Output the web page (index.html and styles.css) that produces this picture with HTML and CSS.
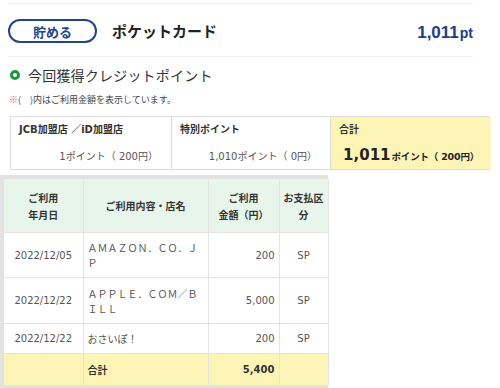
FILE: index.html
```html
<!DOCTYPE html>
<html lang="ja">
<head>
<meta charset="utf-8">
<title>ポケットカード</title>
<link rel="stylesheet" href="styles.css">
</head>
<body>
<div class="page">
  <header class="top">
    <div class="pill">貯める</div>
    <div class="card">ポケットカード</div>
    <div class="pts">1,011<span class="unit">pt</span></div>
  </header>

  <section class="earn">
    <h2 class="title"><span class="ring"></span>今回獲得クレジットポイント</h2>
    <p class="note"><span class="mark">※</span>(　)内はご利用金額を表示しています。</p>
    <div class="ptable">
      <div class="pcell">
        <div class="plabel">JCB加盟店 ／iD加盟店</div>
        <div class="pval">1ポイント（ 200円）</div>
      </div>
      <div class="pcell">
        <div class="plabel">特別ポイント</div>
        <div class="pval">1,010ポイント（ 0円）</div>
      </div>
      <div class="pcell total">
        <div class="plabel">合計</div>
        <div class="pval big"><span class="bignum">1,011</span>ポイント（ 200円）</div>
      </div>
    </div>
  </section>

  <div class="txwrap">
    <table class="tx">
      <colgroup>
        <col class="c1"><col class="c2"><col class="c3"><col class="c4">
      </colgroup>
      <thead>
        <tr>
          <th>ご利用<br>年月日</th>
          <th>ご利用内容・店名</th>
          <th>ご利用<br>金額（円）</th>
          <th>お支払区<br>分</th>
        </tr>
      </thead>
      <tbody>
        <tr class="r1">
          <td class="date">2022/12/05</td>
          <td class="shop">ＡＭＡＺＯＮ．ＣＯ．ＪＰ</td>
          <td class="amt">200</td>
          <td class="kind">SP</td>
        </tr>
        <tr class="r2">
          <td class="date">2022/12/22</td>
          <td class="shop">ＡＰＰＬＥ．ＣＯＭ／ＢＩＬＬ</td>
          <td class="amt">5,000</td>
          <td class="kind">SP</td>
        </tr>
        <tr class="r3">
          <td class="date">2022/12/22</td>
          <td class="shop">おさいぽ！</td>
          <td class="amt">200</td>
          <td class="kind">SP</td>
        </tr>
        <tr class="sum">
          <td></td>
          <td class="shop">合計</td>
          <td class="amt">5,400</td>
          <td></td>
        </tr>
      </tbody>
    </table>
  </div>

  <div class="wm">@daiyoshike</div>
</div>
</body>
</html>
```

FILE: styles.css
```css
html, body {
  margin: 0;
  padding: 0;
  background: #fff;
}
body {
  width: 500px;
  height: 388px;
  overflow: hidden;
  font-family: "DejaVu Sans", "Noto Sans CJK JP", sans-serif;
  color: #333;
}
.page {
  position: relative;
  width: 500px;
  height: 388px;
  overflow: hidden;
}

/* header */
.top {
  margin: 3px 27px 0 8px;
  border-top: 1px solid #f1f1f1;
  border-bottom: 1px solid #f1f1f1;
  padding: 15px 0 13px;
  display: flex;
  align-items: center;
}
.pill {
  width: 89px;
  height: 24px;
  box-sizing: border-box;
  border: 2px solid #23438f;
  border-radius: 12px;
  display: flex;
  align-items: center;
  justify-content: center;
  color: #23438f;
  font-family: "Noto Sans CJK JP", sans-serif;
  font-weight: bold;
  font-size: 13px;
  line-height: 1;
}
.card {
  margin-left: 15px;
  font-family: "Noto Sans CJK JP", sans-serif;
  font-weight: bold;
  font-size: 15px;
  color: #222;
  line-height: 20px;
}
.pts {
  margin-left: auto;
  margin-top: 3px;
  color: #1a3c8a;
  font-family: "Liberation Sans", Arial, sans-serif;
  font-weight: bold;
  font-size: 17px;
  line-height: 20px;
}
.pts .unit {
  font-size: 14px;
  margin-left: 1px;
}

/* earned section */
.earn {
  padding: 0 10px;
}
.title {
  margin: 8px 0 0;
  display: flex;
  align-items: center;
  font-family: "Noto Sans CJK JP", sans-serif;
  font-weight: normal;
  font-size: 14px;
  letter-spacing: 0.2px;
  line-height: 20px;
  color: #333;
}
.ring {
  width: 10px;
  height: 10px;
  box-sizing: border-box;
  border: 3px solid #1b9a3c;
  border-radius: 50%;
  margin-right: 8px;
}
.note {
  margin: 9px 0 0 -1px;
  font-family: "Noto Sans CJK JP", sans-serif;
  font-size: 9px;
  line-height: 12px;
  color: #444;
}
.note .mark {
  color: #e25a5a;
}
.ptable {
  margin-top: 10px;
  display: grid;
  grid-template-columns: 160px 159px 161px;
  border: 1px solid #dedede;
  box-sizing: border-box;
  width: 480px;
  height: 54px;
}
.pcell {
  display: flex;
  flex-direction: column;
  justify-content: space-between;
  padding: 7px 13px 5px 8px;
  border-left: 1px solid #dedede;
  min-width: 0;
}
.pcell:first-child {
  border-left: 0;
}
.pcell.total {
  background: #fdf5b6;
  padding-right: 12px;
}
.plabel {
  font-size: 10px;
  font-weight: bold;
  line-height: 12px;
  color: #333;
  white-space: nowrap;
}
.pval {
  text-align: right;
  font-size: 10px;
  line-height: 14px;
  color: #555;
  white-space: nowrap;
}
.pval.big {
  font-weight: bold;
  color: #222;
  line-height: 18px;
  margin-bottom: -2px;
  font-size: 9.5px;
  letter-spacing: -0.2px;
}
.bignum {
  font-size: 15px;
  letter-spacing: 0;
  margin-right: 1px;
}

/* transaction table */
.txwrap {
  margin-top: 5px;
  width: 328px;
  box-sizing: border-box;
  border: 4px solid #e2e2e2;
  border-right: 0;
}
.tx {
  width: 324px;
  table-layout: fixed;
  border-collapse: collapse;
  font-size: 10px;
}
.tx col.c1 { width: 79px; }
.tx col.c2 { width: 125px; }
.tx col.c3 { width: 71px; }
.tx col.c4 { width: 49px; }
.tx th,
.tx td {
  border: 1px solid #e4e4e4;
  padding: 0 4px;
}
.tx tr > :first-child {
  border-left: 0;
}
.tx thead tr:first-child th {
  border-top: 0;
}
.tx th {
  height: 53px;
  background: #e7f5ea;
  font-family: "Noto Sans CJK JP", sans-serif;
  font-weight: bold;
  line-height: 17px;
  color: #333;
  text-align: center;
}
.tx td {
  color: #555;
  line-height: 15px;
}
.tx .r1 td { height: 44px; }
.tx .r2 td { height: 45px; }
.tx .r3 td { height: 29px; }
.tx .sum td {
  height: 31px;
  background: #fdf5b6;
  font-weight: bold;
  color: #333;
}
.tx tbody tr.sum td {
  border-bottom: 0;
}
.date {
  text-align: center;
}
.shop {
  font-family: "Noto Sans CJK JP", sans-serif;
  word-break: break-all;
}
.amt {
  text-align: right;
}
.kind {
  text-align: center;
}

/* watermark */
.wm {
  position: absolute;
  left: 205px;
  top: 335px;
  font-family: "DejaVu Sans", sans-serif;
  font-size: 46px;
  line-height: 50px;
  color: rgba(0, 0, 0, 0.022);
  transform: rotate(-30deg);
  transform-origin: left center;
  white-space: nowrap;
  pointer-events: none;
}
```
